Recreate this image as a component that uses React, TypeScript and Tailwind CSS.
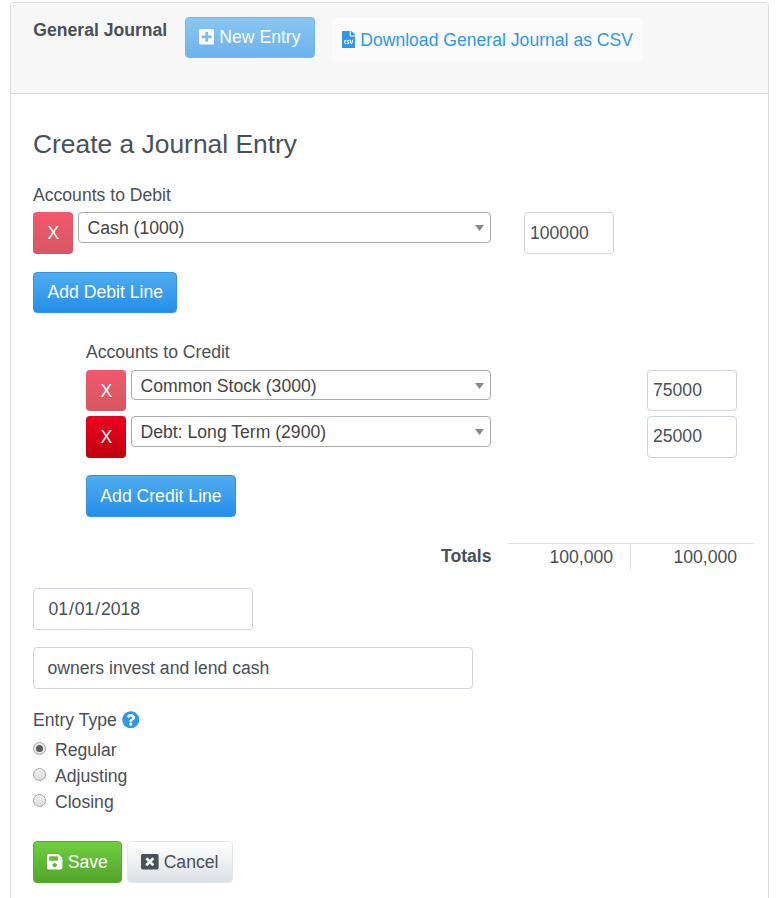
import React from "react";
import {
  FaFileCsv,
  FaPlusSquare,
  FaQuestionCircle,
  FaSave,
  FaWindowClose,
} from "react-icons/fa";

const primary =
  "flex items-center justify-center rounded border border-[#2d96ea] bg-linear-to-b from-[#4facee] to-[#228eeb] text-white";

function RemoveButton({ faded, className }: { faded?: boolean; className: string }) {
  return (
    <button
      className={`flex w-10 shrink-0 items-center justify-center rounded bg-linear-to-b from-[#ef0020] to-[#bf000c] pl-[0.6px] text-white ${
        faded ? "opacity-65" : ""
      } ${className}`}
    >
      X
    </button>
  );
}

function AccountSelect({ label, className }: { label: string; className: string }) {
  return (
    <div
      className={`ml-[5px] flex items-center justify-between rounded border border-[#aaa] bg-white pr-[6px] pl-[8.6px] text-[#444] ${className}`}
    >
      <span>{label}</span>
      <svg className="h-[6px] w-[9px]" viewBox="0 0 9 6" fill="#888">
        <path d="M0 0h9L4.5 6z" />
      </svg>
    </div>
  );
}

function Amount({ value, className }: { value: string; className: string }) {
  return (
    <div className={`flex w-[90px] items-center rounded border border-[#ced4da] pl-[5px] ${className}`}>
      {value}
    </div>
  );
}

function Radio({ label, checked }: { label: string; checked?: boolean }) {
  return (
    <label className="flex h-[26px] items-center">
      <span className="mb-[3px] flex h-[13px] w-[13px] items-center justify-center rounded-full border border-[#a5a5a5] bg-linear-to-b from-[#eee] to-[#ddd]">
        {checked && <span className="h-[7px] w-[7px] rounded-full bg-[#5c5c5c]" />}
      </span>
      <span className="ml-[9px]">{label}</span>
    </label>
  );
}

export default function App() {
  return (
    <div className="h-[898px] overflow-hidden bg-white px-[10px] pt-[2px] font-['Liberation_Sans',Arial,sans-serif] text-[17.6px] leading-[26px] text-[#495057]">
      <div className="h-[920px] rounded border border-[#dfdfdf]">
        <header className="flex h-[91px] items-start rounded-t border-b border-[#d9d9d9] bg-[#f7f7f7] pt-[14px] pl-[22px]">
          <h1 className="w-[152px] pl-[0.3px] font-bold">General Journal</h1>
          <button className={`${primary} h-[41px] w-[130px] pb-[2px] opacity-65`}>
            <FaPlusSquare className="mr-[5px] -ml-[0.6px] h-[17.6px] w-[15.4px]" />
            New Entry
          </button>
          <a className="ml-[17px] flex h-[44px] w-[311px] items-center rounded bg-[#fbfbfb] pt-[2px] pl-[10px] text-[#2d98ec]">
            <FaFileCsv className="mr-[5px] mb-[1px] h-[17.6px] w-[13.2px]" />
            Download General Journal as CSV
          </a>
        </header>

        <main className="px-[22px] pt-[35px]">
          <h2 className="h-[53px] text-[26.4px] leading-[30px]">Create a Journal Entry</h2>

          <div className="h-[30px]">Accounts to Debit</div>
          <div className="flex h-[60px] items-start">
            <RemoveButton faded className="h-[42px]" />
            <AccountSelect label="Cash (1000)" className="h-[31px] w-[413px]" />
            <Amount value="100000" className="ml-[33px] h-[42px]" />
          </div>
          <button className={`${primary} h-[41px] w-[144px] pb-[2px] pl-[0.6px]`}>Add Debit Line</button>

          <section className="mt-[26px] pl-[53px]">
            <div className="h-[31px]">Accounts to Credit</div>
            <div className="flex h-[46px] items-start">
              <RemoveButton faded className="h-[41px]" />
              <AccountSelect label="Common Stock (3000)" className="h-[30px] w-[360px] pt-[1px]" />
              <Amount value="75000" className="ml-[156px] h-[41px] pb-[2px]" />
            </div>
            <div className="flex h-[59px] items-start">
              <RemoveButton className="h-[42px]" />
              <AccountSelect label="Debt: Long Term (2900)" className="h-[31px] w-[360px]" />
              <Amount value="25000" className="ml-[156px] h-[42px] pb-[2px]" />
            </div>
            <button className={`${primary} h-[42px] w-[150px]`}>Add Credit Line</button>
          </section>

          <div className="-mr-[22px] mt-[26px] flex">
            <div className="w-[458.5px] text-right font-bold">Totals</div>
            <div className="ml-[16.5px] flex h-[27px] w-[246px] border-t border-[#dee2e6] text-right">
              <div className="w-[123px] border-r border-[#dee2e6] pr-[17px]">100,000</div>
              <div className="w-[123px] pr-[17px]">100,000</div>
            </div>
          </div>

          <div className="mt-[18px] flex h-[42px] w-[220px] items-center rounded border border-[#ced4da] pl-[14.5px]">
            <span>01</span>
            <span className="mx-[0.9px]">/</span>
            <span>01</span>
            <span className="mx-[0.9px]">/</span>
            <span>2018</span>
          </div>
          <div className="mt-[17px] flex h-[42px] w-[440px] items-center rounded border border-[#ced4da] pl-[13.4px]">
            owners invest and lend cash
          </div>

          <div className="mt-[18px] flex h-[30px] items-start">
            Entry Type
            <FaQuestionCircle className="mt-[3.6px] ml-[5px] h-[17.6px] w-[17.6px] text-[#2d98ec]" />
          </div>
          <Radio label="Regular" checked />
          <Radio label="Adjusting" />
          <Radio label="Closing" />

          <div className="mt-[26px] flex gap-[5px]">
            <button className="flex h-[42px] w-[89px] items-center justify-center rounded border border-[#57ad2b] bg-linear-to-b from-[#6fd03f] to-[#52a42a] text-white">
              <FaSave className="mr-[5px] mb-[1px] h-[17.6px] w-[15.4px]" />
              Save
            </button>
            <button className="flex h-[42px] w-[106px] items-center justify-center rounded border border-[#e4e7eb] bg-linear-to-b from-white to-[#dce0e5]">
              <FaWindowClose className="mr-[5px] -ml-[0.5px] mb-[1px] h-[17.6px] w-[17.6px]" />
              Cancel
            </button>
          </div>
        </main>
      </div>
    </div>
  );
}
